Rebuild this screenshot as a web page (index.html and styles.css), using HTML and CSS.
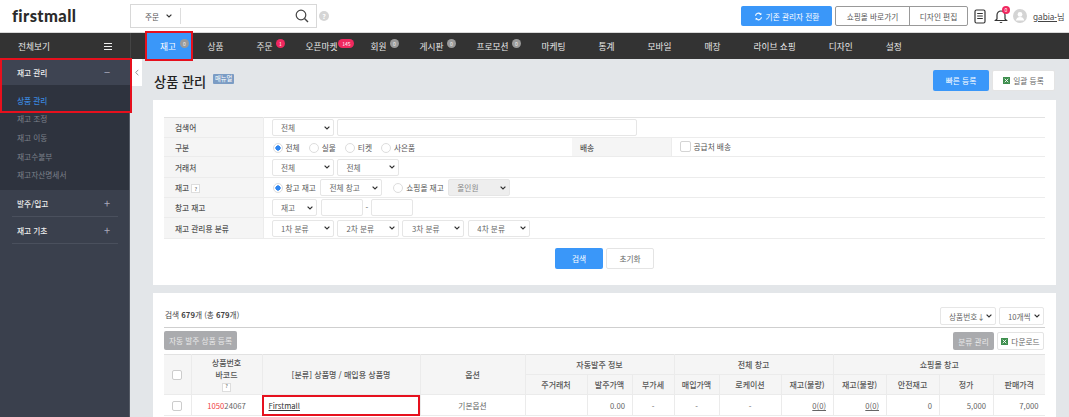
FILE: index.html
```html
<!DOCTYPE html>
<html lang="ko">
<head>
<meta charset="utf-8">
<title>상품 관리</title>
<link rel="stylesheet" href="styles.css">
</head>
<body>
<header class="top">
  <div class="logo">firstmall</div>
  <div class="search">
    <select class="search-sel"><option>주문</option></select>
    <span class="search-div"></span>
    <svg class="search-ico" viewBox="0 0 14 14" width="14" height="14"><circle cx="6" cy="6" r="4.8" fill="none" stroke="#444" stroke-width="1.2"/><path d="M9.5 9.5L13 13" stroke="#444" stroke-width="1.4"/></svg>
  </div>
  <span class="help">?</span>
  <div class="top-right">
    <button class="btn-switch"><svg viewBox="0 0 12 12" width="9" height="9"><path d="M2 5a4 4 0 0 1 7-2M10 7a4 4 0 0 1-7 2" fill="none" stroke="#fff" stroke-width="1.5"/><path d="M9.8 1v3H7M2.2 11V8H5" fill="#fff"/></svg>기존 관리자 전환</button>
    <div class="btn-group"><a class="shop">쇼핑몰 바로가기</a><a class="design">디자인 편집</a></div>
    <svg class="doc" viewBox="0 0 12 15" width="12" height="15"><rect x="1" y="1" width="10" height="13" rx="1.5" fill="none" stroke="#333" stroke-width="1.2"/><path d="M3.2 4.5h5.6M3.2 7h5.6M3.2 9.5h5.6" stroke="#333"/></svg>
    <span class="bell"><svg viewBox="0 0 14 15" width="14" height="15"><path d="M7 2a4 4 0 0 0-4 4v4L1.5 11.5h11L11 10V6a4 4 0 0 0-4-4z" fill="none" stroke="#333" stroke-width="1.2"/><path d="M5.5 13a1.6 1.6 0 0 0 3 0" fill="#333"/></svg><b class="bell-badge">0</b></span>
    <svg class="avatar" viewBox="0 0 14 14" width="14" height="14"><circle cx="7" cy="7" r="7" fill="#d4d4d4"/><circle cx="7" cy="5.4" r="2.4" fill="#fff"/><path d="M2.8 11.5a4.3 4.3 0 0 1 8.4 0z" fill="#fff"/></svg>
    <span class="user"><u>gabia-</u>님</span>
  </div>
</header>

<nav class="nav">
  <div class="nav-all"><span>전체보기</span><span class="burger"><i></i><i></i><i></i></span></div>
  <ul class="nav-list">
    <li class="active">재고<b class="dot">0</b></li>
    <li>상품</li>
    <li>주문<b class="dot red">1</b></li>
    <li>오픈마켓<b class="dot red wide">145</b></li>
    <li>회원<b class="dot">0</b></li>
    <li>게시판<b class="dot">0</b></li>
    <li>프로모션<b class="dot">0</b></li>
    <li>마케팅</li>
    <li>통계</li>
    <li>모바일</li>
    <li>매장</li>
    <li>라이브 쇼핑</li>
    <li>디자인</li>
    <li>설정</li>
  </ul>
</nav>

<div class="body-wrap">
  <aside class="side">
    <div class="side-mark">
      <div class="side-head"><span>재고 관리</span><span class="sign">−</span></div>
      <div class="side-link current">상품 관리</div>
    </div>
    <div class="side-sub">
      <div class="side-link">재고 조정</div>
      <div class="side-link">재고 이동</div>
      <div class="side-link">재고수불부</div>
      <div class="side-link">재고자산명세서</div>
    </div>
    <div class="side-rest">
      <div class="side-item"><span>발주/입고</span><span class="sign">+</span></div>
      <div class="side-item"><span>재고 기초</span><span class="sign">+</span></div>
    </div>
  </aside>
  <div class="fold"><svg viewBox="0 0 6 10" width="4" height="7"><path d="M5 1L1 5l4 4" fill="none" stroke="#777" stroke-width="1.2"/></svg></div>

  <main class="main">
    <div class="title-row">
      <h1>상품 관리</h1>
      <span class="manual">매뉴얼</span>
      <div class="title-btns">
        <button class="btn blue quick">빠른 등록</button>
        <button class="btn white bulk"><svg class="xls" viewBox="0 0 8 8" width="7" height="7"><rect width="8" height="8" fill="#3f8f4f"/><path d="M2 2l4 4M6 2L2 6" stroke="#fff"/></svg>일괄 등록</button>
      </div>
    </div>

    <section class="panel filter">
      <table class="ftable">
        <colgroup><col class="f1"><col class="f2"><col class="f3"><col></colgroup>
        <tr class="r20"><th>검색어</th><td colspan="3"><select class="s62"><option>전체</option></select> <input class="kw" type="text"></td></tr>
        <tr class="r19"><th>구분</th>
          <td><label class="radio"><input type="radio" name="a" checked>전체</label><label class="radio"><input type="radio" name="a">실물</label><label class="radio"><input type="radio" name="a">티켓</label><label class="radio"><input type="radio" name="a">사은품</label></td>
          <th class="th2">배송</th>
          <td><label class="check"><input type="checkbox">공급처 배송</label></td></tr>
        <tr class="r21"><th>거래처</th><td colspan="3"><select class="s62"><option>전체</option></select> <select class="s62"><option>전체</option></select></td></tr>
        <tr class="r20"><th>재고 <span class="q">?</span></th><td colspan="3"><label class="radio tight"><input type="radio" name="b" checked>창고 재고</label><select class="s62"><option>전체 창고</option></select><label class="radio tight second"><input type="radio" name="b">쇼핑몰 재고</label><select class="s62" disabled><option>올인원</option></select></td></tr>
        <tr class="r20"><th>창고 재고</th><td colspan="3"><select class="s45"><option>재고</option></select> <input class="num" type="text"><span class="dash">-</span><input class="num" type="text"></td></tr>
        <tr class="r21"><th>재고 관리용 분류</th><td colspan="3"><select class="s62"><option>1차 분류</option></select> <select class="s62"><option>2차 분류</option></select> <select class="s62"><option>3차 분류</option></select> <select class="s62"><option>4차 분류</option></select></td></tr>
      </table>
      <div class="filter-btns">
        <button class="btn blue search-btn">검색</button>
        <button class="btn white reset">초기화</button>
      </div>
    </section>

    <section class="panel list">
      <div class="list-top">
        <p class="count">검색 <b>679</b>개 (총 <b>679</b>개)</p>
        <div class="list-sel"><select class="s56"><option>상품번호↓</option></select><select class="s45"><option>10개씩</option></select></div>
      </div>
      <div class="list-act">
        <button class="btn gray auto">자동 발주 상품 등록</button>
        <div class="list-act-r">
          <button class="btn gray cat">분류 관리</button>
          <button class="btn white dl"><svg class="xls" viewBox="0 0 8 8" width="7" height="7"><rect width="8" height="8" fill="#3f8f4f"/><path d="M2 2l4 4M6 2L2 6" stroke="#fff"/></svg>다운로드</button>
        </div>
      </div>
      <table class="ltable">
        <colgroup>
          <col class="c27"><col class="c71"><col class="c158"><col class="c105"><col class="c62"><col class="c45"><col class="c42"><col class="c45"><col class="c62"><col class="c52"><col class="c53"><col class="c53"><col class="c54"><col>
        </colgroup>
        <thead>
          <tr class="h1">
            <th rowspan="2"><span class="cb"></span></th>
            <th rowspan="2" class="code">상품번호<br>바코드<br><span class="q">?</span></th>
            <th rowspan="2">[분류] 상품명 / 매입용 상품명</th>
            <th rowspan="2">옵션</th>
            <th colspan="3">자동발주 정보</th>
            <th colspan="3">전체 창고</th>
            <th colspan="4">쇼핑몰 창고</th>
          </tr>
          <tr class="h2">
            <th>주거래처</th><th>발주가액</th><th>부가세</th><th>매입가액</th><th>로케이션</th><th>재고(불량)</th><th>재고(불량)</th><th>안전재고</th><th>정가</th><th>판매가격</th>
          </tr>
        </thead>
        <tbody>
          <tr class="data">
            <td class="ctr"><span class="cb"></span></td>
            <td class="ctr"><span class="redn">1050</span>24067</td>
            <td class="name"><u>Firstmall</u></td>
            <td class="ctr">기본옵션</td>
            <td></td><td class="rt">0.00</td><td class="ctr">-</td><td class="ctr">-</td><td class="ctr">-</td>
            <td class="rt"><u>0(0)</u></td><td class="rt"><u>0(0)</u></td><td class="rt">0</td><td class="rt">5,000</td><td class="rt">7,000</td>
          </tr>
        </tbody>
      </table>
    </section>
  </main>
</div>
</body>
</html>
```

FILE: styles.css
```css
* { box-sizing: border-box; }
html, body { margin: 0; height: 417px; overflow: hidden; }
body { font-family: "Noto Sans CJK KR", "Noto Sans", sans-serif; font-size: 7.7px; color: #555; background: #e3e6e9; }
button, select, input { font-family: inherit; font-size: inherit; margin: 0; }
ul { list-style: none; margin: 0; padding: 0; }

.top { height: 33px; background: #fff; border-bottom: 1px solid #d9d9d9; display: flex; align-items: center; }
.logo { width: 130px; padding-left: 12px; font-family: "Lato", sans-serif; font-weight: 900; font-size: 16.5px; color: #2b2b2b; letter-spacing: .4px; }
.search { width: 187px; height: 24px; border: 1px solid #d8d8d8; display: flex; align-items: center; padding-left: 9px; padding-right: 7px; }
select { appearance: none; height: 17px; border: 1px solid #e6e6e6; border-radius: 2px; background: #fff url("data:image/svg+xml,%3Csvg xmlns='http://www.w3.org/2000/svg' width='6' height='4' viewBox='0 0 6 4'%3E%3Cpath d='M.6.6L3 3l2.4-2.4' fill='none' stroke='%23333' stroke-width='1.2'/%3E%3C/svg%3E") no-repeat right 3px center; color: #666; padding: 0 0 0 8.5px; vertical-align: middle; font-size: 7.7px; }
select:disabled { background-color: #eee; color: #888; opacity: 1; }
.search-sel { width: 40px; height: 20px; border: 0; color: #555; outline: none; padding: 0 0 0 5px; background-position: right 8px center; }
.search-div { width: 1px; height: 16px; background: #ddd; }
.search-ico { margin-left: auto; }
.help { width: 10px; height: 10px; border-radius: 50%; background: #d5d5d5; color: #fff; font-size: 7px; font-weight: 700; line-height: 10px; text-align: center; margin-left: 2px; }
.top-right { margin-left: auto; display: flex; align-items: center; padding-right: 5px; }
.btn-switch { width: 91px; height: 20px; border: 0; border-radius: 2px; background: #3a97f9; color: #fff; display: flex; align-items: center; justify-content: center; gap: 3px; padding: 0; }
.btn-group { width: 133px; height: 20px; margin-left: 3px; margin-right: 6px; border: 1px solid #999; border-radius: 2px; display: flex; color: #555; }
.btn-group a { display: flex; align-items: center; justify-content: center; }
.shop { width: 74px; border-right: 1px solid #999; }
.design { flex: 1; }
.doc { margin-right: 8px; }
.bell { position: relative; display: flex; margin-right: 5px; }
.bell-badge { position: absolute; right: -2px; top: -3px; width: 8px; height: 8px; border-radius: 50%; background: #f0285f; color: #fff; font-size: 5px; line-height: 8px; text-align: center; font-weight: 400; }
.avatar { margin-right: 6px; }
.user { color: #444; width: 31px; white-space: nowrap; font-family: "Noto Sans", "Noto Sans CJK KR", sans-serif; font-size: 8.2px; }

.nav { height: 26px; background: #333; color: #e8e8e8; display: flex; font-size: 8.7px; }
.nav-all { width: 131px; padding: 0 18px 0 18px; border-right: 1px solid #444; display: flex; align-items: center; justify-content: space-between; }
.burger { display: flex; flex-direction: column; gap: 2px; width: 8px; }
.burger i { display: block; height: 1px; background: #eee; }
.nav-list { display: flex; padding-left: 16px; }
.nav-list li { display: flex; align-items: center; padding: 0 16.5px; position: relative; white-space: nowrap; }
.nav-list li.active { background: #3a97f9; color: #fff; width: 44px; padding: 0 0 0 13px; outline: 2px solid #e6101d; z-index: 2; }
.dot { position: absolute; top: 6px; left: calc(100% - 13px); width: 9px; height: 9px; border-radius: 50%; background: #9a9a9a; color: #eee; font-size: 5px; line-height: 9px; text-align: center; font-weight: 400; }
.nav-list li.active .dot { left: 33px; }
.dot.red { background: #f0285f; color: #fff; }
.nav-list li .dot.wide { width: 16px; height: 9px; border-radius: 5px; left: calc(100% - 15.5px); }

.body-wrap { display: flex; height: 358px; }
.side { width: 130px; flex: none; background: #3a404d; display: flex; flex-direction: column; color: #eee; border-right: 1px solid #555b66; }
.side-mark { outline: 2px solid #e6101d; outline-offset: -1px; position: relative; z-index: 2; margin-left: 1px; margin-right: -2px; height: 53px; }
.side-head { height: 26px; background: #3e4452; display: flex; align-items: center; justify-content: space-between; padding: 0 21px 0 16px; font-weight: 500; }
.side-link { height: 18.7px; display: flex; align-items: center; padding-left: 17px; color: #7d828c; }
.side-link.current { height: 27px; padding-left: 16px; padding-top: 4px; color: #3a86dd; font-weight: 500; background: #2e333e; }
.side-sub { background: #2e333e; margin-top: -2.5px; height: 80.5px; }
.side-item { margin: 0 11px 0 12px; height: 27px; border-bottom: 1px solid #4a505d; display: flex; align-items: center; justify-content: space-between; padding: 0 8px 0 5px; font-weight: 500; }
.sign { font-size: 11px; color: #aab; font-weight: 400; line-height: 1; }
.fold { width: 11px; flex: none; height: 27px; margin-left: 1px; background: #fff; display: flex; align-items: center; justify-content: center; }

.main { flex: 1; padding: 0 13px 0 11px; min-width: 0; }
.title-row { height: 41px; display: flex; align-items: flex-start; }
.title-row h1 { margin: 12px 0 0 1px; font-size: 13.2px; line-height: 22px; font-weight: 500; color: #222; }
.manual { margin: 15px 0 0 7px; width: 21px; height: 10px; border-radius: 1px; background: #7b9cc4; color: #fff; font-size: 6.3px; line-height: 10px; text-align: center; }
.title-btns { margin-left: auto; display: flex; gap: 3px; margin-top: 11px; margin-right: 1px; }
.btn { height: 21px; border-radius: 2px; border: 0; padding: 0; display: inline-flex; align-items: center; justify-content: center; gap: 3px; }
.btn.blue { background: #3a97f9; color: #fff; }
.btn.white { background: #fff; border: 1px solid #e4e4e4; color: #666; }
.btn.gray { background: #aaabae; color: #e9e9e9; }
.quick { width: 56px; }
.bulk { width: 63px; }

.panel { background: #fff; padding: 0 11px; }
.filter { height: 185px; padding-top: 17px; }
table { border-collapse: collapse; width: 100%; table-layout: fixed; }
.ftable { border-top: 1px solid #e2e2e2; }
.ftable th { text-align: left; background: #f5f5f5; padding: 0 0 0 11px; font-weight: 500; color: #555; border-bottom: 1px solid #ececec; border-right: 1px solid #ececec; }
.ftable .th2 { padding-left: 8px; }
.ftable td { padding: 0 0 0 8px; border-bottom: 1px solid #ececec; white-space: nowrap; }
.ftable select { margin-right: 1.3px; }
.ftable .s45 { margin-right: 2.3px; }
.f1 { width: 99px; }
.f2 { width: 309px; }
.f3 { width: 99px; }
.r19 { height: 19px; }
.r20 { height: 20px; }
.r21 { height: 21px; }
input[type="text"] { height: 17px; border: 1px solid #e6e6e6; border-radius: 2px; vertical-align: middle; padding: 0; }
.s62 { width: 62px; }
.s56 { width: 56px; }
.s45 { width: 45px; }
.kw { width: 300px; }
.num { width: 42px; }
.dash { display: inline-block; width: 8px; text-align: center; }
.radio { display: inline-flex; align-items: center; gap: 3px; margin-right: 8px; color: #555; vertical-align: middle; }
.radio.tight { margin-right: 4px; }
.radio.second { margin-left: 9px; }
.radio input { appearance: none; width: 10px; height: 10px; margin: 0 0 0 1px; border: 1px solid #ddd; border-radius: 50%; background: #fff; }
.radio input:checked { background: radial-gradient(circle, #2f86f0 0 2.4px, #fff 2.9px); }
.check { display: inline-flex; align-items: center; gap: 3px; }
.check input { appearance: none; width: 11px; height: 11px; margin: 0; border: 1px solid #d4d4d4; border-radius: 2px; background: #fff; }
.q { display: inline-flex; width: 9px; height: 9px; border: 1px solid #ddd; color: #666; font-size: 5.5px; align-items: center; justify-content: center; font-weight: 400; background: #fff; vertical-align: middle; }
.filter-btns { display: flex; justify-content: center; gap: 3px; margin-top: 9px; }
.search-btn, .reset { width: 48px; }

.list { margin-top: 8px; height: 130px; }
.list-top { height: 35px; padding-top: 14px; display: flex; align-items: flex-start; justify-content: space-between; border-bottom: 1px solid #cfcfcf; }
.count { margin: 2px 0 0 1px; color: #444; }
.count b { font-weight: 700; }
.list-sel { display: flex; gap: 3px; margin-right: 1px; }
.list-sel select { height: 18px; padding-left: 8px; }
.list-act { display: flex; justify-content: space-between; align-items: flex-start; height: 26px; padding-top: 3px; }
.auto { width: 73px; height: 19px; }
.list-act-r { display: flex; gap: 3px; margin-right: 1px; margin-top: 1px; }
.cat { width: 41px; height: 18px; }
.dl { width: 47px; height: 18px; }
.xls { flex: none; }

.ltable { border-top: 1px solid #e2e2e2; }
.ltable th { background: #f5f5f5; font-weight: 500; font-size: 8px; color: #555; border-bottom: 1px solid #ebebeb; border-left: 1px solid #ebebeb; padding: 0; text-align: center; }
.ltable thead tr:first-child th:first-child { border-left: 0; }
.h1 { height: 20px; }
.h2 { height: 20px; }
.code { line-height: 11.5px; }
.ltable td { height: 21px; border-left: 1px solid #ebebeb; border-bottom: 1px solid #ebebeb; padding: 0 6.5px; white-space: nowrap; color: #666; }
.ltable td:first-child { border-left: 0; }
.ctr { text-align: center; }
.rt { text-align: right; }
.ltable .redn { color: #f04040; }
.ltable td.name { padding-left: 6px; color: #333; outline: 2px solid #e6101d; outline-offset: -2px; }
.cb { display: inline-block; width: 10px; height: 10px; border: 1px solid #ccc; border-radius: 2px; background: #fff; vertical-align: middle; }
.c27 { width: 27px; }
.c71 { width: 71px; }
.c158 { width: 158px; }
.c105 { width: 105px; }
.c62 { width: 62px; }
.c45 { width: 45px; }
.c42 { width: 42px; }
.c52 { width: 52px; }
.c53 { width: 53px; }
.c54 { width: 54px; }
```
